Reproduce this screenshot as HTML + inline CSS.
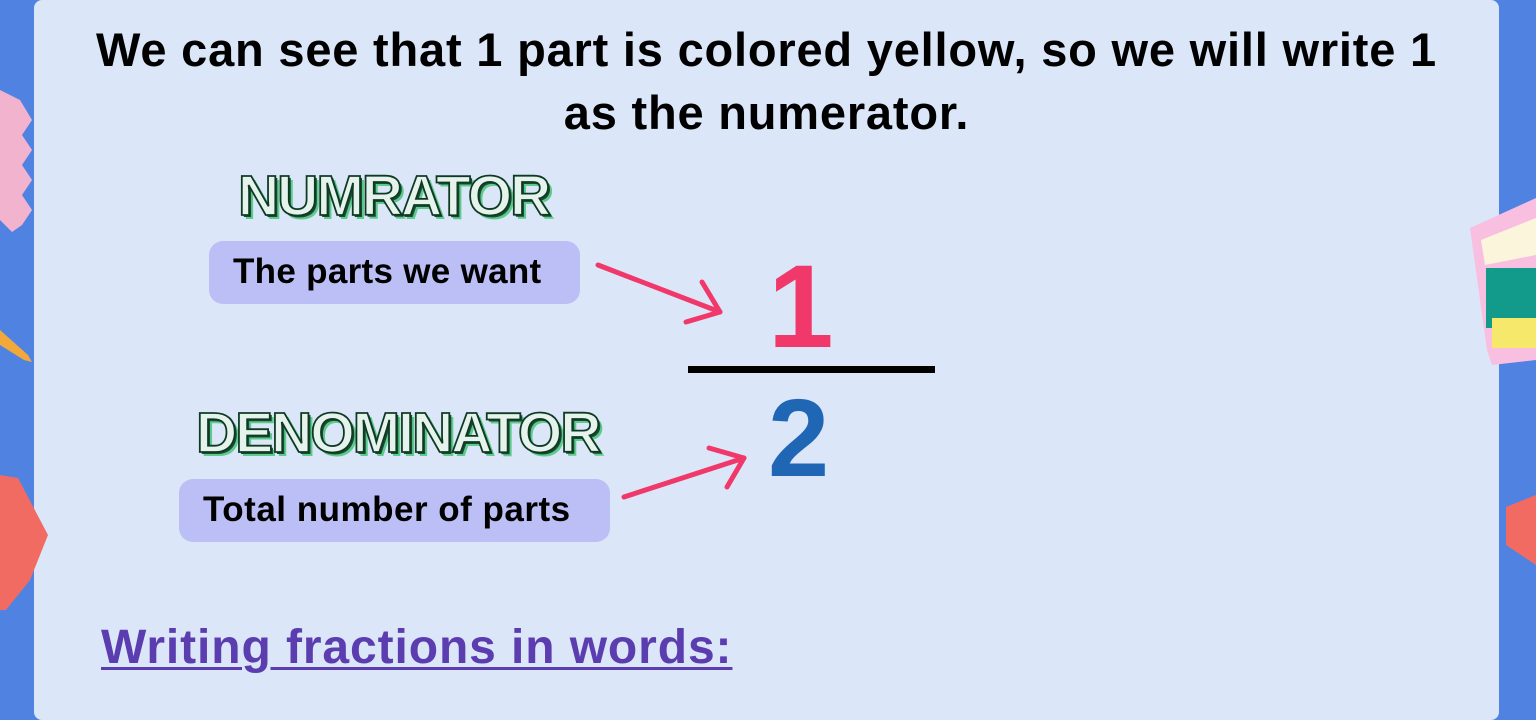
<!DOCTYPE html>
<html><head><style>
html,body{margin:0;padding:0;width:1536px;height:700px;overflow:hidden;background:#5083e1;font-family:"Liberation Sans",sans-serif}
.card{position:absolute;left:34px;top:0;width:1465px;height:720px;background:#dbe6f8;border-radius:8px}
.t{position:absolute;left:34px;width:1465px;text-align:center;font-weight:bold;font-size:47px;color:#000;letter-spacing:0.8px;line-height:50px}
.box{position:absolute;background:#bcbff6;border-radius:14px;font-weight:bold;color:#000;box-sizing:border-box;padding-left:24px;line-height:62px;white-space:nowrap}
.out{position:absolute;font-weight:900;font-size:57px;color:#e6f2ec;-webkit-text-stroke:1.8px #0e3a24;text-shadow:2px 2px 0 #1d4a32,4px 4px 0 #5ccc8c;letter-spacing:-2px;line-height:60px}
.num{position:absolute;font-weight:bold;font-size:118px;line-height:1}
</style></head><body>
<div class="card"></div>
<svg style="position:absolute;left:0;top:0" width="1536" height="700">
<polygon points="0,90 20,100 32,120 22,135 32,150 22,165 32,180 22,195 32,210 22,225 12,232 0,220" fill="#f2b3cf"/>
<polygon points="0,330 28,355 32,362 24,360 0,345" fill="#f3a83c"/>
<polygon points="0,475 18,478 48,535 30,580 6,610 0,610" fill="#f26b63"/>
<polygon points="1470,228 1536,198 1536,360 1492,365 1487,350" fill="#f8bfe0"/>
<polygon points="1481,240 1536,218 1536,255 1485,265" fill="#fbf5dc"/>
<rect x="1486" y="268" width="50" height="60" fill="#129a8b"/>
<rect x="1492" y="318" width="44" height="30" fill="#f6e86a"/>
<polygon points="1506,507 1536,495 1536,565 1506,545" fill="#f26b63"/>
</svg>
<div class="t" style="top:25px">We can see that 1 part is colored yellow, so we will write 1</div>
<div class="t" style="top:88px">as the numerator.</div>
<div class="out" style="left:238px;top:166px">NUMRATOR</div>
<div class="out" style="left:196px;top:403px">DENOMINATOR</div>
<div class="box" style="left:209px;top:241px;width:371px;height:63px;font-size:35px;letter-spacing:0.3px">The parts we want</div>
<div class="box" style="left:179px;top:479px;width:431px;height:63px;font-size:35px;letter-spacing:0.5px">Total number of parts</div>
<svg style="position:absolute;left:0;top:0" width="1536" height="700">
<g stroke="#f0386b" stroke-width="5" fill="none" stroke-linecap="round" stroke-linejoin="round">
<line x1="598" y1="265" x2="720" y2="312"/>
<polyline points="686,322 720,312 702,282"/>
<line x1="624" y1="497" x2="744" y2="458"/>
<polyline points="709,448 744,458 727,487"/>
</g>
<rect x="688" y="366" width="247" height="7" fill="#000"/>
</svg>
<div class="num" style="left:768px;top:248px;color:#f0386b">1</div>
<div class="num" style="left:768px;top:384px;color:#1f67b5;font-size:110px">2</div>
<div style="position:absolute;left:101px;top:620px;font-weight:bold;font-size:48px;letter-spacing:0.9px;color:#5c3db0;text-decoration:underline;text-decoration-thickness:3px;text-underline-offset:4px;white-space:nowrap">Writing fractions in words:</div>
</body></html>
